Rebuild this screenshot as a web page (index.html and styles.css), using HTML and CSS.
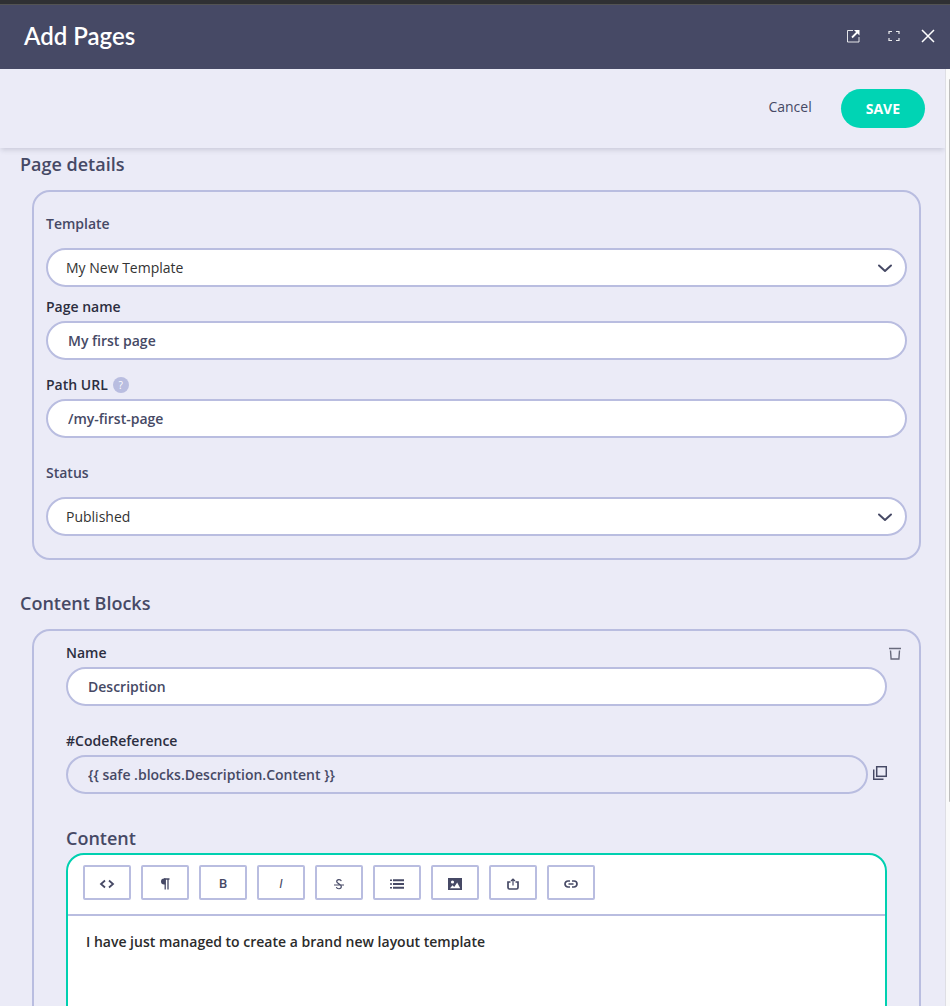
FILE: index.html
```html
<!DOCTYPE html>
<html lang="en">
<head>
<meta charset="utf-8">
<title>Add Pages</title>
<link rel="stylesheet" href="styles.css">
</head>
<body>
<header class="titlebar">
  <h1 class="title">Add Pages</h1>
  <div class="window-actions">
    <button class="icon-btn" type="button" aria-label="Open in new window">
      <svg width="14" height="14" viewBox="0 0 14 14" fill="none" stroke="currentColor"><path d="M7 1.500H1.500v11.500h11.500V8" stroke-width="1" opacity=".85"/><path d="M6 8.500L11.500 3" stroke-width="1.800"/><path d="M8 1h5.500v5.500z" fill="currentColor" stroke="none"/></svg>
    </button>
    <button class="icon-btn" type="button" aria-label="Full screen">
      <svg width="12" height="12" viewBox="0 0 12 12" fill="none" stroke="currentColor" stroke-width="1.200" opacity=".9"><path d="M1 4V1.500h3M8 1.500h3V4M11 8v2.500H8M4 10.500H1V8"/></svg>
    </button>
    <button class="icon-btn" type="button" aria-label="Close">
      <svg width="14" height="14" viewBox="0 0 14 14" fill="none" stroke="currentColor" stroke-width="1.500"><path d="M1 1l12 12M13 1L1 13"/></svg>
    </button>
  </div>
</header>
<div class="shell">
  <main class="content">
    <div class="actions">
      <button class="cancel" type="button">Cancel</button>
      <button class="save" type="button">SAVE</button>
    </div>
    <form class="form">
      <h2 class="heading">Page details</h2>
      <section class="card details">
        <div class="field spaced">
          <label class="label muted" for="template">Template</label>
          <div class="select-wrap">
            <select class="control select" id="template"><option>My New Template</option></select>
            <svg class="chevron" width="16" height="10" viewBox="0 0 16 10" fill="none" stroke="currentColor" stroke-width="2" stroke-linecap="round" stroke-linejoin="round"><path d="M2 2.500l6 5.500 6-5.500"/></svg>
          </div>
        </div>
        <div class="field name-field">
          <label class="label" for="page-name">Page name</label>
          <input class="control" id="page-name" type="text" value="My first page">
        </div>
        <div class="field url-field">
          <div class="label-row">
            <label class="label" for="path-url">Path URL</label>
            <button class="help" type="button" aria-label="Help">?</button>
          </div>
          <input class="control" id="path-url" type="text" value="/my-first-page">
        </div>
        <div class="field spaced">
          <label class="label muted" for="status">Status</label>
          <div class="select-wrap">
            <select class="control select" id="status"><option>Published</option></select>
            <svg class="chevron" width="16" height="10" viewBox="0 0 16 10" fill="none" stroke="currentColor" stroke-width="2" stroke-linecap="round" stroke-linejoin="round"><path d="M2 2.500l6 5.500 6-5.500"/></svg>
          </div>
        </div>
      </section>

      <h2 class="heading">Content Blocks</h2>
      <section class="card block">
        <div class="field block-name">
          <div class="label-row split">
            <label class="label" for="block-name">Name</label>
            <button class="trash" type="button" aria-label="Delete block">
              <svg width="12" height="13" viewBox="0 0 12 13" fill="none" stroke="currentColor" stroke-width="1.400"><path d="M0 1.500h12M1.500 3.500l.6 8.500h7.800l.6-8.500"/></svg>
            </button>
          </div>
          <input class="control" id="block-name" type="text" value="Description">
        </div>
        <div class="field code-field">
          <label class="label" for="code-ref">#CodeReference</label>
          <div class="code-row">
            <input class="control readonly" id="code-ref" type="text" readonly value="{{ safe .blocks.Description.Content }}">
            <button class="copy" type="button" aria-label="Copy code reference">
              <svg width="14" height="14" viewBox="0 0 14 14" fill="none" stroke="currentColor" stroke-width="1.500"><rect x="3.700" y=".7" width="9.600" height="9.600"/><path d="M.7 3.500v9.800H10.500"/></svg>
            </button>
          </div>
        </div>
        <h3 class="subheading">Content</h3>
        <div class="editor">
          <div class="tools">
            <button class="tool" type="button" aria-label="Source"><svg width="16" height="10" viewBox="0 0 16 10" fill="none" stroke="currentColor" stroke-width="1.800"><path d="M6 1.500L2 5l4 3.500M10 1.500L14 5l-4 3.500"/></svg></button>
            <button class="tool" type="button" aria-label="Paragraph"><svg width="10" height="12" viewBox="0 0 10 12" fill="none" stroke="currentColor" stroke-width="1.300"><path d="M4 1H9.500M5.200 1v10.500M8 1v10.500"/><path d="M5.500 .5H4a3 3 0 000 6h1.500z" fill="currentColor" stroke="none"/></svg></button>
            <button class="tool" type="button" aria-label="Bold">B</button>
            <button class="tool italic" type="button" aria-label="Italic">I</button>
            <button class="tool" type="button" aria-label="Strikethrough"><svg width="12" height="12" viewBox="0 0 12 12" fill="none" stroke="currentColor" stroke-width="1.200"><path d="M1 7h10M8.300 3.200C7.800 1 3.700 1 3.700 3.600 3.700 5.800 8.300 5.900 8.300 8.600 8.300 11.400 3.900 11.400 3.400 9"/></svg></button>
            <button class="tool" type="button" aria-label="List"><svg width="14" height="10" viewBox="0 0 14 10" fill="currentColor"><path d="M0 .5h2v1.500H0zM3 .3h11v1.900H3zM0 4.200h2v1.500H0zM3 4h11v1.900H3zM0 8h2v1.500H0zM3 7.800h11v1.900H3z"/></svg></button>
            <button class="tool" type="button" aria-label="Image"><svg width="14" height="12" viewBox="0 0 14 12"><path d="M0 0h14v12H0z" fill="currentColor"/><circle cx="4.500" cy="4" r="1.600" fill="#fff"/><path d="M2 10.200l2.500-3L6.200 9l3-4.500 3 5.700z" fill="#fff"/></svg></button>
            <button class="tool" type="button" aria-label="Upload"><svg width="12" height="12" viewBox="0 0 12 12" fill="none" stroke="currentColor" stroke-width="1.700"><path d="M3.500 4H1v5.500q0 1.500 1.500 1.500h7q1.500 0 1.500-1.500V4H8.500"/><path d="M6 7.500V1.500M4 3l2-2 2 2" stroke-width="1.200"/></svg></button>
            <button class="tool" type="button" aria-label="Link"><svg width="14" height="8" viewBox="0 0 14 8" fill="none" stroke="currentColor" stroke-width="1.700"><path d="M6 1H4a3 3 0 000 6h2M8 1h2a3 3 0 010 6H8M4.500 4h5"/></svg></button>
          </div>
          <div class="editor-body" contenteditable="true" role="textbox" aria-label="Content" spellcheck="false">I have just managed to create a brand new layout template</div>
        </div>
      </section>
    </form>
  </main>
  <div class="rail" aria-hidden="true"><div class="thumb"></div></div>
</div>
</body>
</html>
```
FILE: styles.css
```css
* {
  box-sizing: border-box;
}

body {
  margin: 0;
  height: 100vh;
  display: flex;
  flex-direction: column;
  overflow: hidden;
  background: #ebebf7;
  color: #464965;
  font-family: "Open Sans", sans-serif;
  font-size: 14px;
  line-height: 20px;
}

button,
input,
select {
  font: inherit;
  color: inherit;
}

button {
  padding: 0;
  border: 0;
  background: none;
  cursor: pointer;
}

svg {
  display: block;
}

h1,
h2,
h3 {
  margin: 0;
}

.titlebar {
  flex: none;
  display: flex;
  align-items: center;
  justify-content: space-between;
  height: 69px;
  padding: 0 15px 2px 24px;
  border-top: 4px solid #2f3033;
  box-shadow: inset 0 1px #535353;
  background: #464965;
  color: #fff;
}

.title {
  font-family: Lato, sans-serif;
  font-size: 24px;
  font-weight: 600;
  line-height: 32px;
}

.window-actions {
  display: flex;
  align-items: center;
  gap: 21px;
}

.icon-btn:first-child {
  margin-right: 7px;
}

.shell {
  flex: 1;
  min-height: 0;
  display: grid;
  grid-template-columns: 1fr 5px;
}

.content {
  overflow-y: auto;
  scrollbar-width: none;
}

.rail {
  padding: 10px 0 0 3px;
  border-left: 1px solid #dedee4;
  background: #fafafa;
}

.thumb {
  height: 78%;
  border-radius: 1px 0 0 1px;
  background: #bdbdbd;
}

.actions {
  display: flex;
  align-items: center;
  justify-content: flex-end;
  gap: 29px;
  height: 79px;
  padding: 0 20px;
  box-shadow: 0 3px 5px -1px rgba(70, 73, 101, 0.2);
}

.cancel {
  padding-bottom: 4px;
}

.save {
  height: 39px;
  padding: 0 25px;
  border-radius: 20px;
  background: #00d4b4;
  color: #fff;
  font-weight: 700;
}

.form {
  padding: 4px 24px 24px 20px;
}

.heading,
.subheading {
  font-size: 18px;
  font-weight: 600;
  line-height: 24px;
}

.card {
  margin: 14px 0 31px 12px;
  border: 2px solid #b9bde0;
  border-radius: 18px;
}

.details {
  padding: 22px 12px;
}

.block {
  padding: 12px 32px 24px;
}

.field {
  display: flex;
  flex-direction: column;
  gap: 4px;
}

.spaced {
  gap: 14px;
}

.name-field {
  margin: 10px 0 15px;
}

.url-field {
  margin-bottom: 25px;
}

.block-name {
  margin-bottom: 25px;
}

.code-field {
  margin-bottom: 32px;
}

.label {
  color: #2c2e40;
  font-weight: 600;
}

.muted {
  color: #464965;
}

.label-row {
  display: flex;
  align-items: center;
  gap: 5px;
}

.split {
  justify-content: space-between;
}

.help {
  width: 16px;
  height: 16px;
  border-radius: 50%;
  background: #b9bde0;
  color: #fff;
  font-size: 10px;
  line-height: 16px;
}

.control {
  width: 100%;
  height: 39px;
  padding: 0 20px;
  border: 2px solid #b9bde0;
  border-radius: 20px;
  background: #fff;
  font-weight: 600;
}

.select-wrap {
  position: relative;
}

.select {
  display: block;
  appearance: none;
  padding: 0 18px;
  color: #333;
  font-weight: 400;
}

.chevron {
  position: absolute;
  top: 15px;
  right: 14px;
  pointer-events: none;
}

.trash {
  margin-right: -14px;
  color: #686a7c;
}

.code-row {
  display: flex;
  align-items: center;
  gap: 5px;
}

.readonly {
  flex: 1;
  min-width: 0;
  background: transparent;
}

.copy {
  padding-bottom: 4px;
}

.editor {
  margin-top: 3px;
  min-height: 240px;
  border: 2px solid #00d0b0;
  border-radius: 18px;
  background: #fff;
}

.tools {
  display: flex;
  flex-wrap: wrap;
  gap: 10px;
  padding: 10px 15px 14px;
  border-bottom: 2px solid #b9bde0;
}

.tool {
  display: flex;
  align-items: center;
  justify-content: center;
  width: 48px;
  height: 35px;
  padding-top: 2px;
  border: 2px solid #b9bde0;
  border-radius: 2px;
  font-family: Roboto, sans-serif;
  font-size: 13px;
  font-weight: 500;
}

.italic {
  font-style: italic;
  font-weight: 400;
}

.editor-body {
  padding: 16px 18px;
  outline: 0;
  color: #2b2b2b;
  font-weight: 600;
}
```
